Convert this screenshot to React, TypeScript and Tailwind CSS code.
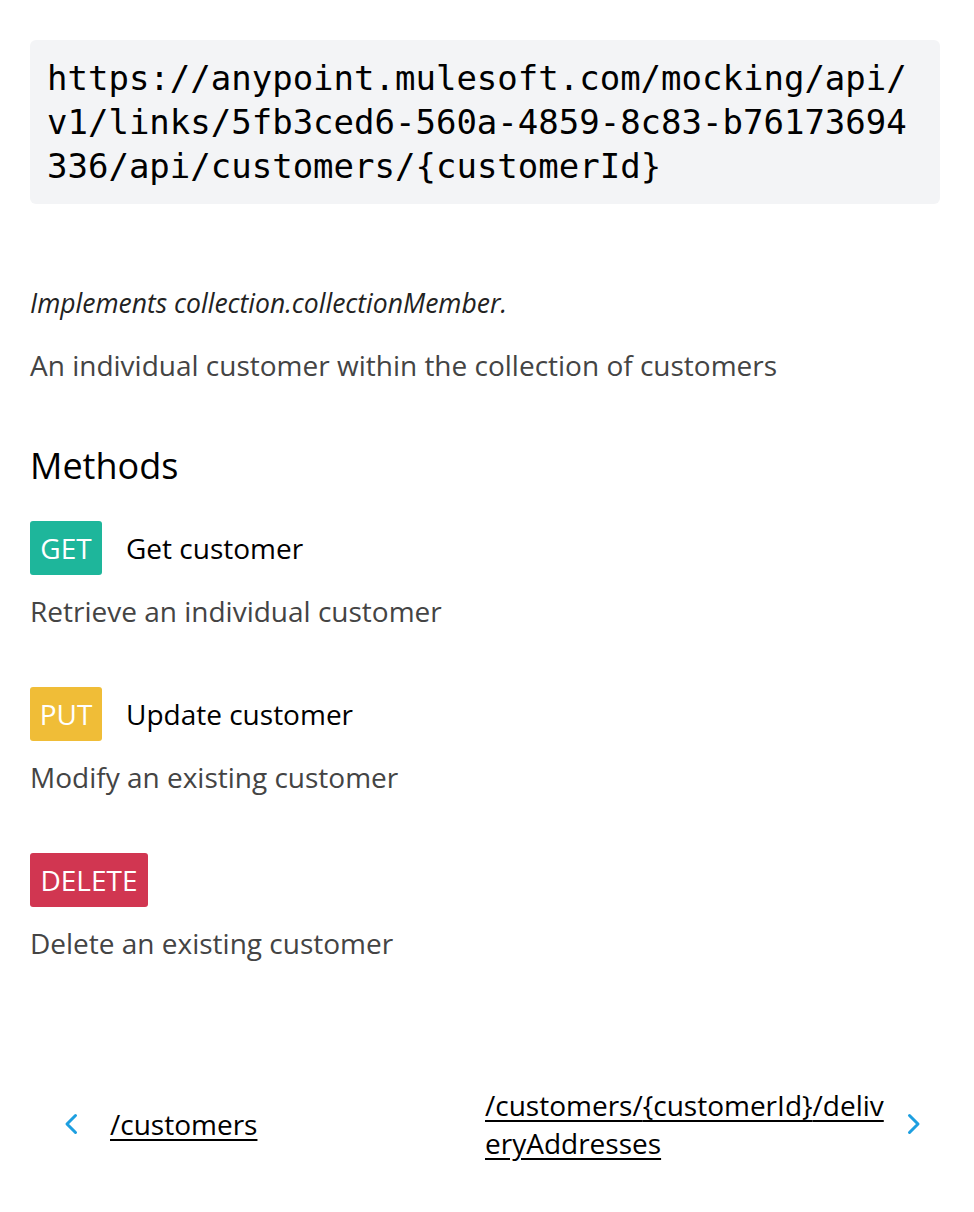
const methods = [
    { verb: 'GET', name: 'Get customer', desc: 'Retrieve an individual customer', cls: 'bg-[#1eb69b] w-[72px]' },
    { verb: 'PUT', name: 'Update customer', desc: 'Modify an existing customer', cls: 'bg-[#f0bd37] w-[72px]' },
    { verb: 'DELETE', name: '', desc: 'Delete an existing customer', cls: 'bg-[#d13651] w-[118px]' },
];

const Chevron = ({ dir }: { dir: 'left' | 'right' }) => (
    <svg width="16" height="24" viewBox="0 0 16 24" className="shrink-0 text-[#1d9fe0]">
        <path
            d={dir === 'left' ? 'M12.5 3.5 L4 12 L12.5 20.5' : 'M3.5 3.5 L12 12 L3.5 20.5'}
            fill="none"
            stroke="currentColor"
            strokeWidth="3"
            strokeLinecap="round"
            strokeLinejoin="round"
        />
    </svg>
);

export default function App() {
    return (
        <div className="min-h-[1212px] bg-white pl-[30px] pr-[34px] pt-10 font-['Open_Sans',sans-serif]">
            <pre className="rounded-md bg-[#f3f4f6] px-[17px] py-4 font-['DejaVu_Sans_Mono',monospace] text-[34px] leading-[44px] text-black whitespace-pre-wrap break-all">
                https://anypoint.mulesoft.com/mocking/api/v1/links/5fb3ced6-560a-4859-8c83-b76173694336/api/customers/{'{customerId}'}
            </pre>

            <p className="mt-[80px] text-[26.5px] leading-[39px] italic text-[#222]">Implements collection.collectionMember.</p>
            <p className="mt-[23px] text-[28px] leading-[39px] text-[#444]">
                An individual customer within the collection of customers
            </p>

            <h2 className="mt-[60px] text-[36px] leading-[41px] text-black">Methods</h2>

            <div className="mt-[35px]">
                {methods.map((m, i) => (
                    <div key={m.verb} className={i > 0 ? 'mt-[56px]' : ''}>
                        <div className="flex items-center gap-[24px]">
                            <span
                                className={`flex h-[54px] items-center justify-center rounded-[3px] text-[28px] text-white ${m.cls}`}
                            >
                                {m.verb}
                            </span>
                            {m.name && <span className="text-[28px] text-black">{m.name}</span>}
                        </div>
                        <p className="mt-[17px] text-[28px] leading-[39px] text-[#444]">{m.desc}</p>
                    </div>
                ))}
            </div>

            <div className="mt-[123px] flex items-center justify-between">
                <a className="flex items-center gap-[31px] pl-[33px] text-[28px] leading-[38px] text-black underline underline-offset-4">
                    <Chevron dir="left" />
                    <span>/customers</span>
                </a>
                <a className="flex items-center gap-[19px] pr-[18px] text-[28px] leading-[38px] text-black underline underline-offset-4">
                    <span className="w-[402px] break-all">/customers/{'{customerId}'}/deliveryAddresses</span>
                    <Chevron dir="right" />
                </a>
            </div>
        </div>
    );
}
